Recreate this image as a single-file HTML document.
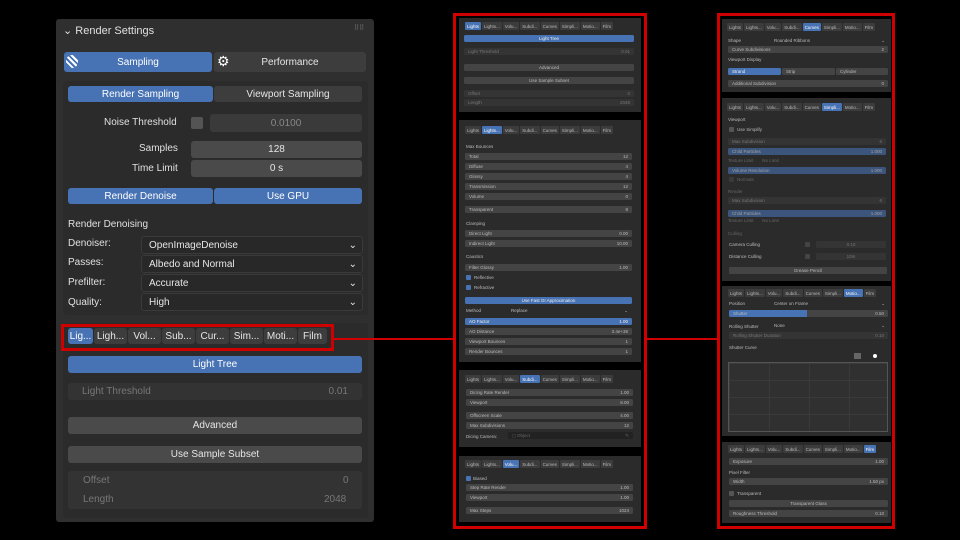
<!DOCTYPE html>
<html><head><meta charset="utf-8"><style>
*{box-sizing:border-box;margin:0;padding:0}
body{width:960px;height:540px;background:#000;position:relative;overflow:hidden;font-family:"Liberation Sans",sans-serif;color:#ddd}
.a{position:absolute}
.p{position:absolute;background:#303030}
.b{position:absolute;border-radius:3px;background:#545454;font-size:10px;display:flex;align-items:center;justify-content:center;color:#e6e6e6}
.bl{background:#4772b3 !important;color:#fff}
.dk{background:#282828;justify-content:flex-start;padding-left:7px;border:1px solid #3a3a3a}
.lb{position:absolute;font-size:10px;color:#e0e0e0}
.m{position:absolute;background:#2b2b2b}
.f{position:absolute;height:7px;border-radius:1.5px;background:#444;font-size:4.5px;color:#bbb;display:flex;justify-content:space-between;align-items:center;padding:0 4px}
.fc{justify-content:center}
.fb{background:#4772b3;color:#eee}
.fd{background:#343434;color:#777}
.t{position:absolute;font-size:4.5px;color:#bbb}
.tb{position:absolute;height:8px;display:flex;gap:1px}
.tb span{background:#3c3c3c;font-size:4.5px;color:#bbb;display:flex;align-items:center;padding:0 2px;border-radius:1px}
.tb span.on{background:#4772b3;color:#fff}
.ck{position:absolute;width:5px;height:5px;background:#4772b3;border-radius:1px}
.cu{position:absolute;width:5px;height:5px;background:#555;border-radius:1px}
.red{position:absolute;border:3px solid #d00000}
</style></head><body>

<!-- LEFT PANEL -->
<div class="p" style="left:56px;top:19px;width:318px;height:503px;border-radius:3px;background:#2f2f2f"></div>
<div class="lb" style="left:63px;top:24px;font-size:11px">⌄ Render Settings</div>
<div class="lb" style="left:354px;top:24px;font-size:7px;color:#777">⠿⠿</div>
<div class="b bl" style="left:64px;top:52px;width:148px;height:20px">Sampling</div>
<div class="a" style="left:66px;top:55px;width:12px;height:13px;background:repeating-linear-gradient(45deg,#fff 0 2px,#4772b3 2px 4px);border-radius:6px"></div>
<div class="b" style="left:214px;top:52px;width:152px;height:20px;background:#3d3d3d">Performance</div>
<div class="a" style="left:217px;top:54px;font-size:14px;color:#fff;line-height:14px">⚙</div>

<div class="m" style="left:63px;top:81px;width:305px;height:234px;border-radius:3px"></div>
<div class="b bl" style="left:68px;top:86px;width:145px;height:16px">Render Sampling</div>
<div class="b" style="left:214px;top:86px;width:148px;height:16px;background:#3d3d3d">Viewport Sampling</div>
<div class="lb" style="left:104px;top:117px">Noise Threshold</div>
<div class="a" style="left:191px;top:117px;width:12px;height:12px;background:#545454;border-radius:2px"></div>
<div class="b" style="left:210px;top:114px;width:152px;height:18px;background:#3a3a3a;color:#888">0.0100</div>
<div class="lb" style="left:139px;top:143px">Samples</div>
<div class="b" style="left:191px;top:141px;width:171px;height:17px;background:#4a4a4a">128</div>
<div class="lb" style="left:132px;top:163px">Time Limit</div>
<div class="b" style="left:191px;top:160px;width:171px;height:17px;background:#4a4a4a">0 s</div>
<div class="b bl" style="left:68px;top:188px;width:145px;height:16px">Render Denoise</div>
<div class="b bl" style="left:214px;top:188px;width:148px;height:16px">Use GPU</div>
<div class="lb" style="left:68px;top:219px">Render Denoising</div>
<div class="lb" style="left:68px;top:238px">Denoiser:</div>
<div class="lb" style="left:68px;top:257px">Passes:</div>
<div class="lb" style="left:68px;top:277px">Prefilter:</div>
<div class="lb" style="left:68px;top:297px">Quality:</div>
<div class="b dk" style="left:141px;top:236px;width:222px;height:18px">OpenImageDenoise<span style="position:absolute;right:5px">⌄</span></div>
<div class="b dk" style="left:141px;top:255px;width:222px;height:18px">Albedo and Normal<span style="position:absolute;right:5px">⌄</span></div>
<div class="b dk" style="left:141px;top:274px;width:222px;height:18px">Accurate<span style="position:absolute;right:5px">⌄</span></div>
<div class="b dk" style="left:141px;top:293px;width:222px;height:18px">High<span style="position:absolute;right:5px">⌄</span></div>

<div class="m" style="left:63px;top:323px;width:305px;height:195px;border-radius:3px"></div>
<div class="a" style="left:68px;top:328px;display:flex;gap:1px;height:16px">
<span class="b bl" style="position:static;width:25px">Lig...</span>
<span class="b" style="position:static;width:33px;background:#3d3d3d">Ligh...</span>
<span class="b" style="position:static;width:33px;background:#3d3d3d">Vol...</span>
<span class="b" style="position:static;width:33px;background:#3d3d3d">Sub...</span>
<span class="b" style="position:static;width:33px;background:#3d3d3d">Cur...</span>
<span class="b" style="position:static;width:33px;background:#3d3d3d">Sim...</span>
<span class="b" style="position:static;width:33px;background:#3d3d3d">Moti...</span>
<span class="b" style="position:static;width:29px;background:#3d3d3d">Film</span>
</div>
<div class="b bl" style="left:68px;top:356px;width:294px;height:17px">Light Tree</div>
<div class="b" style="left:68px;top:383px;width:294px;height:17px;background:#333;color:#777;justify-content:space-between;padding:0 14px"><span>Light Threshold</span><span>0.01</span></div>
<div class="b" style="left:68px;top:417px;width:294px;height:17px;background:#4a4a4a">Advanced</div>
<div class="b" style="left:68px;top:446px;width:294px;height:17px;background:#4a4a4a">Use Sample Subset</div>
<div class="a" style="left:68px;top:471px;width:294px;height:38px;background:#333;border-radius:3px"></div>
<div class="lb" style="left:83px;top:475px;color:#777">Offset</div><div class="lb" style="left:343px;top:475px;color:#777">0</div>
<div class="lb" style="left:83px;top:494px;color:#777">Length</div><div class="lb" style="left:324px;top:494px;color:#777">2048</div>

<!-- red connectors -->
<div class="red" style="left:61px;top:324px;width:273px;height:27px"></div>
<div class="a" style="left:333px;top:338px;width:122px;height:2px;background:#d00000"></div>
<div class="a" style="left:645px;top:338px;width:74px;height:2px;background:#d00000"></div>

<!-- MIDDLE COLUMN -->
<div class="red" style="left:453px;top:13px;width:194px;height:516px"></div>
<div class="p" style="left:459px;top:18px;width:182px;height:94px;background:#2b2b2b"></div>
<div class="tb" style="left:465px;top:22px"><span class="on">Lights</span><span>Lights...</span><span>Volu...</span><span>Subdi...</span><span>Curves</span><span>Simpli...</span><span>Motio...</span><span>Film</span></div>
<div class="f fb fc" style="left:464px;top:35px;width:170px">Light Tree</div>
<div class="f fd" style="left:464px;top:48px;width:170px"><span>Light Threshold</span><span>0.01</span></div>
<div class="f fc" style="left:464px;top:64px;width:170px">Advanced</div>
<div class="f fc" style="left:464px;top:77px;width:170px">Use Sample Subset</div>
<div class="f fd" style="left:464px;top:90px;width:170px"><span>Offset</span><span>0</span></div>
<div class="f fd" style="left:464px;top:99px;width:170px"><span>Length</span><span>2048</span></div>

<div class="p" style="left:459px;top:120px;width:182px;height:242px;background:#2b2b2b"></div>
<div class="tb" style="left:465px;top:126px"><span>Lights</span><span class="on">Lights...</span><span>Volu...</span><span>Subdi...</span><span>Curves</span><span>Simpli...</span><span>Motio...</span><span>Film</span></div>
<div class="t" style="left:466px;top:144px">Max Bounces</div>
<div class="f" style="left:465px;top:153px;width:167px"><span>Total</span><span>12</span></div>
<div class="f" style="left:465px;top:163px;width:167px"><span>Diffuse</span><span>4</span></div>
<div class="f" style="left:465px;top:173px;width:167px"><span>Glossy</span><span>4</span></div>
<div class="f" style="left:465px;top:183px;width:167px"><span>Transmission</span><span>12</span></div>
<div class="f" style="left:465px;top:193px;width:167px"><span>Volume</span><span>0</span></div>
<div class="f" style="left:465px;top:206px;width:167px"><span>Transparent</span><span>8</span></div>
<div class="t" style="left:466px;top:221px">Clamping</div>
<div class="f" style="left:465px;top:230px;width:167px"><span>Direct Light</span><span>0.00</span></div>
<div class="f" style="left:465px;top:240px;width:167px"><span>Indirect Light</span><span>10.00</span></div>
<div class="t" style="left:466px;top:254px">Caustics</div>
<div class="f" style="left:465px;top:264px;width:167px"><span>Filter Glossy</span><span>1.00</span></div>
<div class="ck" style="left:466px;top:275px"></div><div class="t" style="left:474px;top:275px">Reflective</div>
<div class="ck" style="left:466px;top:285px"></div><div class="t" style="left:474px;top:285px">Refractive</div>
<div class="f fb fc" style="left:465px;top:297px;width:167px">Use Fast GI Approximation</div>
<div class="t" style="left:466px;top:308px">Method</div>
<div class="f" style="left:507px;top:307px;width:125px;background:#2b2b2b"><span>Replace</span><span>⌄</span></div>
<div class="f fb" style="left:465px;top:318px;width:167px"><span>AO Factor</span><span>1.00</span></div>
<div class="f" style="left:465px;top:328px;width:167px"><span>AO Distance</span><span>3.4e+38</span></div>
<div class="f" style="left:465px;top:338px;width:167px"><span>Viewport Bounces</span><span>1</span></div>
<div class="f" style="left:465px;top:348px;width:167px"><span>Render Bounces</span><span>1</span></div>

<div class="p" style="left:459px;top:370px;width:182px;height:77px;background:#2b2b2b"></div>
<div class="tb" style="left:465px;top:375px"><span>Lights</span><span>Lights...</span><span>Volu...</span><span class="on">Subdi...</span><span>Curves</span><span>Simpli...</span><span>Motio...</span><span>Film</span></div>
<div class="f" style="left:466px;top:389px;width:167px"><span>Dicing Rate Render</span><span>1.00</span></div>
<div class="f" style="left:466px;top:399px;width:167px"><span>Viewport</span><span>8.00</span></div>
<div class="f" style="left:466px;top:412px;width:167px"><span>Offscreen Scale</span><span>4.00</span></div>
<div class="f" style="left:466px;top:422px;width:167px"><span>Max Subdivisions</span><span>12</span></div>
<div class="t" style="left:466px;top:434px">Dicing Camera:</div>
<div class="f" style="left:508px;top:432px;width:125px;background:#222;color:#666"><span>◻ Object</span><span>✎</span></div>

<div class="p" style="left:459px;top:456px;width:182px;height:66px;background:#2b2b2b"></div>
<div class="tb" style="left:465px;top:460px"><span>Lights</span><span>Lights...</span><span class="on">Volu...</span><span>Subdi...</span><span>Curves</span><span>Simpli...</span><span>Motio...</span><span>Film</span></div>
<div class="ck" style="left:466px;top:476px"></div><div class="t" style="left:473px;top:476px">Biased</div>
<div class="f" style="left:466px;top:484px;width:167px"><span>Step Rate Render</span><span>1.00</span></div>
<div class="f" style="left:466px;top:494px;width:167px"><span>Viewport</span><span>1.00</span></div>
<div class="f" style="left:466px;top:507px;width:167px"><span>Max Steps</span><span>1024</span></div>

<!-- RIGHT COLUMN -->
<div class="red" style="left:717px;top:13px;width:178px;height:516px"></div>
<div class="p" style="left:722px;top:19px;width:169px;height:73px;background:#2b2b2b"></div>
<div class="tb" style="left:727px;top:23px"><span>Lights</span><span>Lights...</span><span>Volu...</span><span>Subdi...</span><span class="on">Curves</span><span>Simpli...</span><span>Motio...</span><span>Film</span></div>
<div class="t" style="left:728px;top:38px">Shape</div>
<div class="f" style="left:770px;top:37px;width:119px;background:#2b2b2b"><span>Rounded Ribbons</span><span>⌄</span></div>
<div class="f" style="left:728px;top:46px;width:160px"><span>Curve Subdivisions</span><span>2</span></div>
<div class="t" style="left:728px;top:57px">Viewport Display</div>
<div class="f fb" style="left:728px;top:68px;width:53px">Strand</div>
<div class="f" style="left:782px;top:68px;width:53px">Strip</div>
<div class="f" style="left:836px;top:68px;width:52px">Cylinder</div>
<div class="f" style="left:728px;top:80px;width:160px"><span>Additional Subdivision</span><span>0</span></div>

<div class="p" style="left:722px;top:98px;width:169px;height:183px;background:#2b2b2b"></div>
<div class="tb" style="left:727px;top:103px"><span>Lights</span><span>Lights...</span><span>Volu...</span><span>Subdi...</span><span>Curves</span><span class="on">Simpli...</span><span>Motio...</span><span>Film</span></div>
<div class="t" style="left:728px;top:117px">Viewport</div>
<div class="cu" style="left:729px;top:127px"></div><div class="t" style="left:737px;top:127px">Use Simplify</div>
<div class="f fd" style="left:728px;top:138px;width:158px"><span>Max Subdivision</span><span>6</span></div>
<div class="f fb" style="left:728px;top:148px;width:158px;opacity:.6"><span>Child Particles</span><span>1.000</span></div>
<div class="t" style="left:728px;top:158px;color:#666">Texture Limit &nbsp;&nbsp;&nbsp;&nbsp;&nbsp;&nbsp;No Limit</div>
<div class="f fb" style="left:728px;top:167px;width:158px;opacity:.6"><span>Volume Resolution</span><span>1.000</span></div>
<div class="cu" style="left:729px;top:177px;background:#3a3a3a"></div><div class="t" style="left:737px;top:177px;color:#666">Normals</div>
<div class="t" style="left:728px;top:189px;color:#666">Render</div>
<div class="f fd" style="left:728px;top:197px;width:158px"><span>Max Subdivision</span><span>6</span></div>
<div class="f fb" style="left:728px;top:210px;width:158px;opacity:.6"><span>Child Particles</span><span>1.000</span></div>
<div class="t" style="left:728px;top:218px;color:#666">Texture Limit &nbsp;&nbsp;&nbsp;&nbsp;&nbsp;&nbsp;No Limit</div>
<div class="t" style="left:728px;top:231px;color:#666">Culling</div>
<div class="t" style="left:729px;top:242px">Camera Culling</div>
<div class="cu" style="left:805px;top:242px;background:#444"></div>
<div class="f fd fc" style="left:816px;top:241px;width:70px">0.10</div>
<div class="t" style="left:729px;top:254px">Distance Culling</div>
<div class="cu" style="left:805px;top:254px;background:#444"></div>
<div class="f fd fc" style="left:816px;top:253px;width:70px">10m</div>
<div class="f fc" style="left:729px;top:267px;width:158px">Grease Pencil</div>

<div class="p" style="left:722px;top:286px;width:169px;height:150px;background:#2b2b2b"></div>
<div class="tb" style="left:728px;top:289px"><span>Lights</span><span>Lights...</span><span>Volu...</span><span>Subdi...</span><span>Curves</span><span>Simpli...</span><span class="on">Motio...</span><span>Film</span></div>
<div class="t" style="left:729px;top:301px">Position</div>
<div class="f" style="left:770px;top:300px;width:119px;background:#2b2b2b"><span>Center on Frame</span><span>⌄</span></div>
<div class="f" style="left:729px;top:310px;width:159px;background:linear-gradient(90deg,#4772b3 0 49%,#444 49%)"><span>Shutter</span><span>0.50</span></div>
<div class="t" style="left:729px;top:324px">Rolling Shutter</div>
<div class="f" style="left:770px;top:322px;width:119px;background:#2b2b2b"><span>None</span><span>⌄</span></div>
<div class="f fd" style="left:729px;top:332px;width:159px"><span>Rolling Shutter Duration</span><span>0.10</span></div>
<div class="t" style="left:729px;top:345px">Shutter Curve</div>
<div class="a" style="left:854px;top:353px;width:7px;height:6px;background:#666"></div>
<div class="a" style="left:873px;top:354px;width:4px;height:4px;background:#fff;border-radius:2px"></div>
<div class="a" style="left:728px;top:362px;width:160px;height:70px;border:1px solid #555;background:linear-gradient(#3a3a3a 1px,transparent 1px) 0 0/100% 17px,linear-gradient(90deg,#3a3a3a 1px,transparent 1px) 0 0/40px 100%,#303030"></div>

<div class="p" style="left:722px;top:442px;width:169px;height:81px;background:#2b2b2b"></div>
<div class="tb" style="left:728px;top:445px"><span>Lights</span><span>Lights...</span><span>Volu...</span><span>Subdi...</span><span>Curves</span><span>Simpli...</span><span>Motio...</span><span class="on">Film</span></div>
<div class="f" style="left:729px;top:458px;width:159px"><span>Exposure</span><span>1.00</span></div>
<div class="t" style="left:729px;top:470px">Pixel Filter</div>
<div class="f" style="left:729px;top:478px;width:159px"><span>Width</span><span>1.50 px</span></div>
<div class="cu" style="left:729px;top:491px"></div><div class="t" style="left:737px;top:491px">Transparent</div>
<div class="f fc" style="left:729px;top:500px;width:159px">Transparent Glass</div>
<div class="f" style="left:729px;top:510px;width:159px"><span>Roughness Threshold</span><span>0.10</span></div>
</body></html>
